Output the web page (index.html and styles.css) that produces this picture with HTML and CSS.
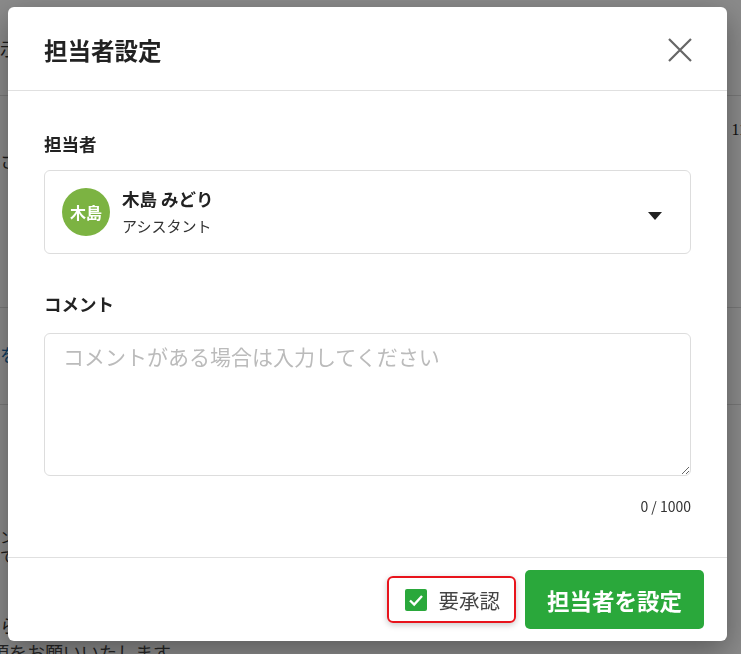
FILE: index.html
```html
<!DOCTYPE html>
<html lang="ja">
<head>
  <meta charset="UTF-8">
  <title>担当者設定</title>
  <link rel="stylesheet" href="styles.css">
</head>
<body>
  <div class="page">
    <div class="page-row row-top">
      <span class="page-text">示</span>
    </div>
    <div class="page-row row-mid">
      <span class="page-text">さ</span>
      <span class="page-num">11</span>
    </div>
    <div class="page-row row-link">
      <span class="page-text link">を</span>
    </div>
    <div class="page-row row-notes">
      <div class="page-text small">ン</div>
      <div class="page-text small">で</div>
      <div class="page-text gap">ら</div>
      <div class="page-text tail">項をお願いいたします</div>
    </div>
  </div>

  <div class="overlay">
    <div class="modal">
      <div class="modal-header">
        <h1>担当者設定</h1>
        <button class="close-btn" aria-label="閉じる">
          <svg width="24" height="24" viewBox="0 0 24 24">
            <path d="M1 1 L23 23 M23 1 L1 23" stroke="#666" stroke-width="2.2" fill="none"/>
          </svg>
        </button>
      </div>

      <div class="modal-body">
        <div class="field">
          <label>担当者</label>
          <div class="select-box">
            <div class="avatar">木島</div>
            <div class="person">
              <div class="person-name">木島 みどり</div>
              <div class="person-role">アシスタント</div>
            </div>
            <span class="caret"></span>
          </div>
        </div>

        <div class="field">
          <label for="comment">コメント</label>
          <textarea id="comment" placeholder="コメントがある場合は入力してください"></textarea>
          <div class="counter">0 / 1000</div>
        </div>
      </div>

      <div class="modal-footer">
        <label class="approve">
          <span class="check">
            <svg width="22" height="22" viewBox="0 0 22 22">
              <path d="M5 11.5 L9.2 15.5 L17 7" stroke="#fff" stroke-width="2.4" fill="none"/>
            </svg>
          </span>
          要承認
        </label>
        <button class="primary">担当者を設定</button>
      </div>
    </div>
  </div>
</body>
</html>
```

FILE: styles.css
```css
html, body {
  margin: 0;
  padding: 0;
  height: 100%;
  overflow: hidden;
}
body {
  font-family: "Noto Sans CJK JP", "Noto Sans", sans-serif;
  color: #222;
  background: #fff;
}

/* page behind the dialog */
.page {
  font-size: 18px;
  color: #333;
}
.page-row {
  display: flex;
  justify-content: space-between;
  align-items: flex-start;
  border-bottom: 1px solid #ddd;
  box-sizing: border-box;
}
.row-top {
  height: 96px;
  padding-top: 38px;
}
.row-mid {
  height: 212px;
  padding-top: 54px;
}
.row-link {
  height: 97px;
  padding-top: 36px;
}
.row-notes {
  flex-direction: column;
  justify-content: flex-start;
  border-bottom: none;
  padding-top: 122px;
}
.page-text {
  line-height: 20px;
}
.small {
  font-size: 15px;
  line-height: 19px;
}
.page-num {
  font-family: "Liberation Serif", serif;
  color: #222;
  font-size: 16px;
  margin-top: -29px;
  margin-right: -6px;
}
.link {
  color: #1a6fb0;
}
.gap {
  margin-top: 50px;
}
.tail {
  margin-top: 7px;
  text-indent: -9px;
  color: #444;
}

/* dialog */
.overlay {
  position: fixed;
  inset: 0;
  background: rgba(0, 0, 0, 0.46);
  padding: 7px 0 0 8px;
}
.modal {
  width: 719px;
  height: 634px;
  background: #fff;
  border-radius: 6px;
  box-shadow: 0 10px 30px rgba(0, 0, 0, 0.35);
  display: flex;
  flex-direction: column;
  overflow: hidden;
}
.modal-header {
  height: 84px;
  flex: 0 0 auto;
  box-sizing: border-box;
  display: flex;
  align-items: center;
  justify-content: space-between;
  padding: 2px 35px 0 36px;
  border-bottom: 1px solid #e0e0e0;
}
h1 {
  margin: 0;
  font-size: 23.5px;
  font-weight: 700;
  color: #222;
}
.close-btn {
  background: none;
  border: none;
  padding: 0;
  width: 24px;
  height: 24px;
  cursor: pointer;
}
.close-btn svg {
  display: block;
}
.modal-body {
  flex: 1;
  padding: 41px 36px 0 36px;
}
.field {
  margin-bottom: 38px;
}
.field label {
  display: block;
  font-size: 17.5px;
  font-weight: 700;
  line-height: 24px;
  margin-bottom: 14px;
  color: #222;
}
.select-box {
  display: flex;
  align-items: center;
  border: 1px solid #ddd;
  border-radius: 6px;
  padding: 17px 28px 17px 17px;
  height: 48px;
}
.avatar {
  width: 48px;
  height: 48px;
  border-radius: 50%;
  background: #7cb342;
  color: #fff;
  font-size: 16px;
  font-weight: 700;
  display: flex;
  align-items: center;
  justify-content: center;
  flex: 0 0 auto;
}
.person {
  flex: 1;
  margin-left: 12px;
}
.person-name {
  font-size: 17.5px;
  font-weight: 700;
  line-height: 24px;
  color: #222;
}
.person-role {
  font-size: 15px;
  line-height: 22px;
  margin-top: 4px;
  color: #333;
}
.caret {
  width: 0;
  height: 0;
  border-left: 7.5px solid transparent;
  border-right: 7.5px solid transparent;
  border-top: 8px solid #222;
  margin-top: 7px;
}
textarea {
  display: block;
  width: 100%;
  height: 143px;
  box-sizing: border-box;
  border: 1px solid #ddd;
  border-radius: 6px;
  padding: 8px 18px;
  font-family: inherit;
  font-size: 21px;
  line-height: 1.4;
  color: #222;
  resize: vertical;
  outline: none;
}
.field label + textarea {
  margin-top: 17px;
}
textarea::placeholder {
  color: #bbb;
}
.counter {
  text-align: right;
  font-size: 14px;
  line-height: 20px;
  margin-top: 20px;
  color: #333;
}
.modal-footer {
  height: 84px;
  flex: 0 0 auto;
  box-sizing: border-box;
  border-top: 1px solid #e0e0e0;
  display: flex;
  align-items: center;
  justify-content: flex-end;
  gap: 9px;
  padding: 0 23px 0 0;
}
.approve {
  display: flex;
  align-items: center;
  gap: 11px;
  height: 47px;
  box-sizing: border-box;
  padding: 0 14px 0 16px;
  border: 2px solid #e8141c;
  border-radius: 6px;
  box-shadow: 0 2px 6px rgba(0, 0, 0, 0.22);
  font-size: 20.5px;
  color: #444;
  cursor: pointer;
}
.check {
  width: 22px;
  height: 22px;
  background: #2aa83b;
  border-radius: 2px;
  display: block;
}
.check svg {
  display: block;
}
.primary {
  height: 59px;
  padding: 0 22px;
  background: #2aa83b;
  color: #fff;
  border: none;
  border-radius: 5px;
  font-family: inherit;
  font-size: 22.5px;
  font-weight: 700;
  cursor: pointer;
}
```
